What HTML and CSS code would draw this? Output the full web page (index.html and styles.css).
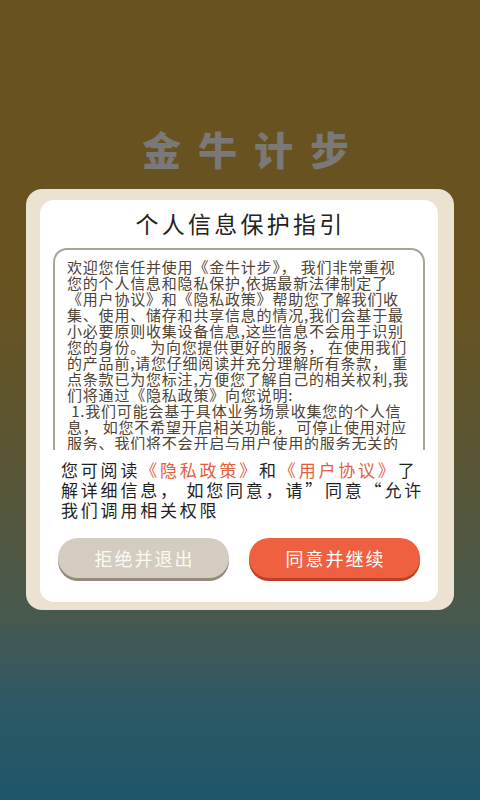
FILE: index.html
```html
<!DOCTYPE html>
<html lang="zh-CN">
<head>
<meta charset="utf-8">
<title>金牛计步</title>
<link rel="stylesheet" href="styles.css">
</head>
<body>
<div class="screen">
  <div class="brand">金牛计步</div>
  <div class="frame">
    <div class="card">
      <h1 class="title">个人信息保护指引</h1>
      <div class="scroll">
        <div class="box">
          欢迎您信任并使用《金牛计步》， 我们非常重视<br>
          您的个人信息和隐私保护,依据最新法律制定了<br>
          《用户协议》和《隐私政策》帮助您了解我们收<br>
          集、使用、储存和共享信息的情况,我们会基于最<br>
          小必要原则收集设备信息,这些信息不会用于识别<br>
          您的身份。 为向您提供更好的服务， 在使用我们<br>
          的产品前,请您仔细阅读并充分理解所有条款， 重<br>
          点条款已为您标注,方便您了解自己的相关权利,我<br>
          们将通过《隐私政策》向您说明:<br>
          &nbsp;1.我们可能会基于具体业务场景收集您的个人信<br>
          息， 如您不希望开启相关功能， 可停止使用对应<br>
          服务、我们将不会开启与用户使用的服务无关的
        </div>
      </div>
      <p class="notice">您可阅读<span class="link">《隐私政策》</span>和<span class="link">《用户协议》</span>了<br>解详细信息， 如您同意，请”同意“允许<br>我们调用相关权限</p>
      <div class="actions">
        <button class="btn btn-reject">拒绝并退出</button>
        <button class="btn btn-accept">同意并继续</button>
      </div>
    </div>
  </div>
</div>
</body>
</html>
```
FILE: styles.css
```css
* { box-sizing: border-box; }
html, body { margin: 0; padding: 0; }
body {
  font-family: "Noto Sans CJK SC", "Noto Sans", sans-serif;
}
.screen {
  width: 480px;
  height: 800px;
  overflow: hidden;
  display: flex;
  flex-direction: column;
  background: linear-gradient(to bottom, #675220 0%, #675321 38%, #56563a 62%, #48594f 77%, #2d5864 88%, #1f566a 100%);
}
.brand {
  margin-top: 128px;
  height: 40px;
  line-height: 40px;
  padding-left: 28px;
  text-align: center;
  font-size: 39px;
  font-weight: 900;
  letter-spacing: 17px;
  color: #7a7977;
}
.frame {
  margin: 21px 26px 0 26px;
  width: 428px;
  background: #ebe2d1;
  border-radius: 16px;
  padding: 11px 16px 8px 14px;
}
.card {
  background: #ffffff;
  border-radius: 14px;
  padding: 8px 0 24px 0;
}
.title {
  margin: 0;
  height: 30px;
  line-height: 30px;
  font-size: 23px;
  font-weight: 400;
  letter-spacing: 3.25px;
  padding-left: 3px;
  text-align: center;
  color: #222222;
}
.scroll {
  margin: 10px 13px 0 13px;
  height: 202px;
  overflow: hidden;
}
.box {
  border: 2px solid #aba397;
  border-radius: 14px;
  padding: 9px 6px 20px 12px;
  font-size: 15px;
  line-height: 16px;
  letter-spacing: 0.8px;
  white-space: nowrap;
  color: #4e4335;
}
.notice {
  margin: 10px 0 0 0;
  padding-left: 21px;
  font-size: 17px;
  line-height: 20px;
  letter-spacing: 2.8px;
  white-space: nowrap;
  color: #1f1f1f;
}
.link { color: #e0603f; }
.actions {
  display: flex;
  gap: 20px;
  margin-top: 18px;
  padding: 0 18px;
}
.btn {
  flex: 1;
  height: 40px;
  border: none;
  border-radius: 20px;
  font-family: "Noto Sans CJK SC", "Noto Sans", sans-serif;
  font-size: 18px;
  letter-spacing: 2px;
  padding: 0 0 0 2px;
  color: #ffffff;
}
.btn-reject {
  background: #d4ccc0;
  box-shadow: 0 3px 0 #958a7c;
  color: #fbf9f4;
}
.btn-accept {
  background: #ef6040;
  box-shadow: 0 3px 0 #b9432a;
}
```
